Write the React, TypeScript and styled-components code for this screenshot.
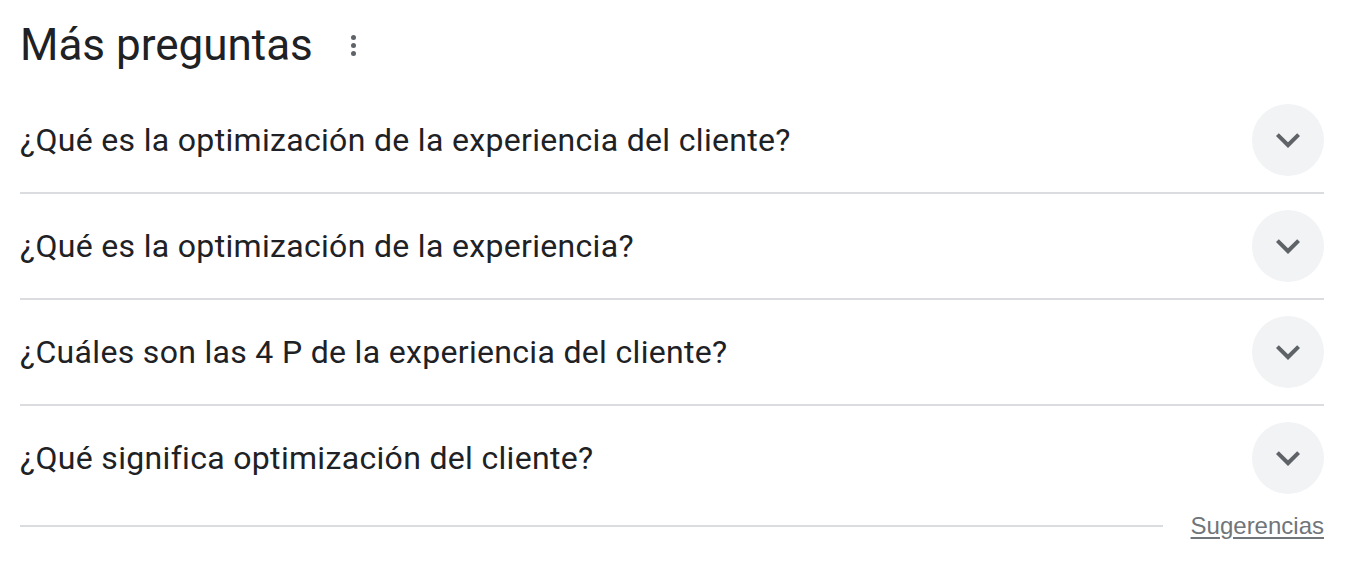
import React from "react";
import styled, { createGlobalStyle } from "styled-components";

const Global = createGlobalStyle`
  html, body { margin: 0; padding: 0; background: #fff; }
  body { font-family: Roboto, "Noto Sans", Arial, sans-serif; color: #202124; }
`;

const Wrap = styled.div`
  width: 1304px;
  padding: 0 0 0 20px;
`;

const Header = styled.div`
  display: flex;
  align-items: center;
  height: 88px;
  gap: 38px;
`;

const Title = styled.h2`
  margin: 0;
  font-family: Roboto, "Noto Sans", sans-serif;
  font-weight: 400;
  font-size: 44px;
  line-height: 52px;
  color: #202124;
  padding-top: 2px;
`;

const Dots = styled.div`
  display: flex;
  flex-direction: column;
  gap: 3px;
  padding-top: 2px;
`;

const Dot = styled.span`
  width: 5px;
  height: 5px;
  border-radius: 50%;
  background: #5f6368;
`;

const Row = styled.div<{ $last?: boolean }>`
  display: flex;
  align-items: center;
  justify-content: space-between;
  height: 104px;
  border-bottom: ${(p) => (p.$last ? "none" : "2px solid #dadce0")};
`;

const Question = styled.span`
  font-size: 32px;
  line-height: 40px;
  letter-spacing: 0.32px;
  color: #202124;
`;

const Toggle = styled.div`
  width: 72px;
  height: 72px;
  border-radius: 50%;
  background: #f1f3f4;
  display: flex;
  align-items: center;
  justify-content: center;
  flex-shrink: 0;
`;

const Footer = styled.div`
  display: flex;
  align-items: center;
  gap: 28px;
  height: 32px;
`;

const Line = styled.div`
  flex: 1;
  height: 2px;
  background: #dadce0;
`;

const Link = styled.a`
  font-family: "Liberation Sans", Arial, sans-serif;
  font-size: 24px;
  color: #70757a;
  text-decoration: underline;
  text-underline-offset: 3px;
`;

const questions = [
  "¿Qué es la optimización de la experiencia del cliente?",
  "¿Qué es la optimización de la experiencia?",
  "¿Cuáles son las 4 P de la experiencia del cliente?",
  "¿Qué significa optimización del cliente?",
];

const Chevron = () => (
  <svg width="48" height="48" viewBox="0 0 24 24" fill="#5f6368">
    <path d="M16.59 8.59L12 13.17 7.41 8.59 6 10l6 6 6-6z" />
  </svg>
);

export default function App() {
  return (
    <>
      <Global />
      <Wrap>
        <Header>
          <Title>Más preguntas</Title>
          <Dots>
            <Dot />
            <Dot />
            <Dot />
          </Dots>
        </Header>
        {questions.map((q, i) => (
          <Row key={i} $last={i === questions.length - 1}>
            <Question>{q}</Question>
            <Toggle>
              <Chevron />
            </Toggle>
          </Row>
        ))}
        <Footer>
          <Line />
          <Link href="#">Sugerencias</Link>
        </Footer>
      </Wrap>
    </>
  );
}
